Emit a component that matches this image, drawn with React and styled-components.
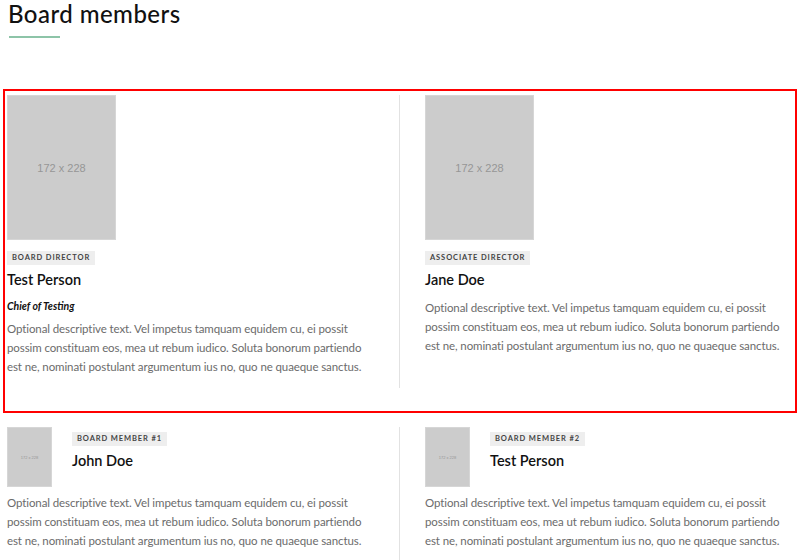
import React from "react";
import styled, { createGlobalStyle } from "styled-components";

const GlobalStyle = createGlobalStyle`
  body {
    margin: 0;
    background: #fff;
    font-family: "Lato", "Noto Sans", sans-serif;
  }
`;

const bio =
  "Optional descriptive text. Vel impetus tamquam equidem cu, ei possit possim constituam eos, mea ut rebum iudico. Soluta bonorum partiendo est ne, nominati postulant argumentum ius no, quo ne quaeque sanctus.";

const directors = [
  { tag: "Board director", name: "Test Person", role: "Chief of Testing" },
  { tag: "Associate director", name: "Jane Doe" },
];

const members = [
  { tag: "Board member #1", name: "John Doe" },
  { tag: "Board member #2", name: "Test Person" },
];

export default function App() {
  return (
    <Page>
      <GlobalStyle />
      <Heading>Board members</Heading>
      <Underline />

      <Row highlighted>
        {directors.map((d, i) => (
          <Column key={d.name} first={i === 0}>
            <Placeholder large>172 x 228</Placeholder>
            <Tag>{d.tag}</Tag>
            <Name>{d.name}</Name>
            {d.role && <Role>{d.role}</Role>}
            <Bio>{bio}</Bio>
          </Column>
        ))}
      </Row>

      <Row>
        {members.map((m, i) => (
          <Column key={m.tag} first={i === 0}>
            <MemberHead>
              <Placeholder>172 x 228</Placeholder>
              <MemberTitle>
                <Tag compact>{m.tag}</Tag>
                <Name>{m.name}</Name>
              </MemberTitle>
            </MemberHead>
            <Bio>{bio}</Bio>
          </Column>
        ))}
      </Row>
    </Page>
  );
}

const Page = styled.div`
  padding: 0 5px;
`;

const Heading = styled.h2`
  margin: 0 0 0 3px;
  font-size: 24px;
  font-weight: 500;
  letter-spacing: 0.45px;
  line-height: 28px;
  color: #111;
`;

const Underline = styled.div`
  width: 51px;
  height: 2px;
  margin: 8px 0 53px 4px;
  background: #8dc4a8;
`;

const Row = styled.div`
  display: grid;
  grid-template-columns: 1fr 1fr;
  padding: 4px 0 23px;
  margin-bottom: 12px;
  outline: ${(p) => (p.highlighted ? "2px solid #ff0000" : "none")};
`;

const Column = styled.div`
  display: flex;
  flex-direction: column;
  align-items: flex-start;
  padding: ${(p) => (p.first ? "0 26px 12px 2px" : "0 0 12px 25px")};
  border-right: ${(p) => (p.first ? "1px solid #e2e2e2" : "none")};
`;

const Placeholder = styled.div`
  box-sizing: border-box;
  width: ${(p) => (p.large ? "109px" : "45px")};
  height: ${(p) => (p.large ? "145px" : "60px")};
  flex-shrink: 0;
  display: flex;
  align-items: center;
  justify-content: center;
  background: #cccccc;
  border: 1px solid #d6d6d6;
  color: #969696;
  font-family: "Liberation Sans", Arial, sans-serif;
  font-size: ${(p) => (p.large ? "11px" : "4px")};
`;

const Tag = styled.span`
  display: block;
  margin-top: ${(p) => (p.compact ? "5px" : "11px")};
  padding: 0 5px;
  height: 14px;
  line-height: 14px;
  background: #eeeeee;
  color: #444;
  font-size: 7.5px;
  font-weight: 700;
  letter-spacing: 0.9px;
  text-transform: uppercase;
`;

const Name = styled.div`
  margin: 6px 0 3px;
  font-size: 14.5px;
  font-weight: 600;
  line-height: 18px;
  color: #111;
`;

const Role = styled.div`
  margin-top: 7px;
  font-size: 10.5px;
  font-weight: 700;
  font-style: italic;
  line-height: 14px;
  color: #111;
`;

const Bio = styled.p`
  margin: 6px 0 0;
  font-size: 11.5px;
  letter-spacing: -0.1px;
  line-height: 19px;
  color: #6b6b6b;
`;

const MemberHead = styled.div`
  display: flex;
  gap: 20px;
  align-items: flex-start;
`;

const MemberTitle = styled.div`
  display: flex;
  flex-direction: column;
  align-items: flex-start;
`;
